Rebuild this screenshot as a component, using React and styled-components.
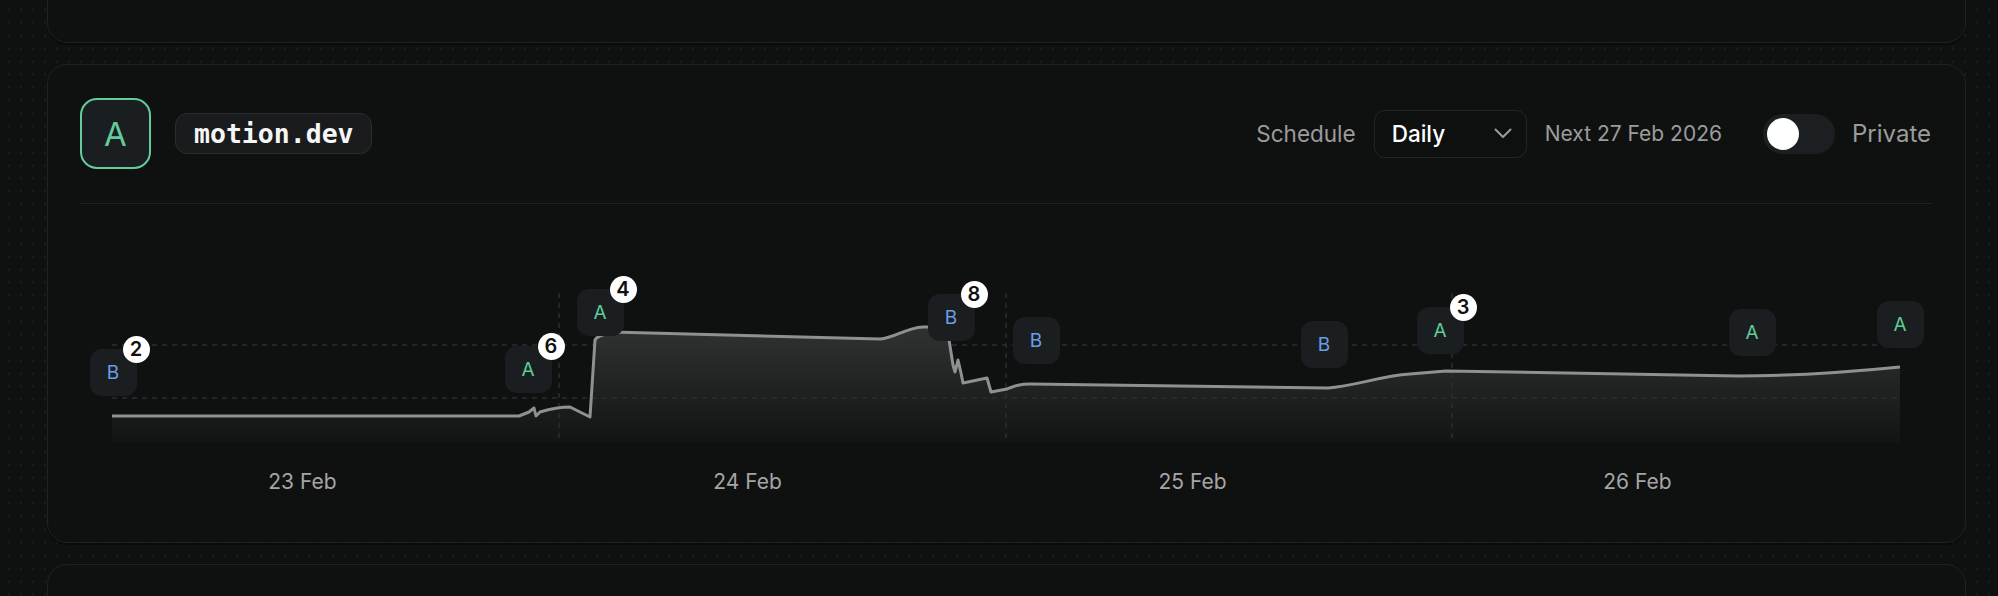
import React from 'react';
import styled, { createGlobalStyle } from 'styled-components';

const GlobalStyle = createGlobalStyle`
  html, body {
    margin: 0;
    height: 596px;
    overflow: hidden;
    background-color: #0f1111;
    background-image: radial-gradient(circle, #1a1d1d 1px, transparent 1.3px);
    background-size: 12px 13px;
    background-position: 3px 3px;
    font-family: 'Inter', 'Noto Sans', sans-serif;
    color: #e8e8e8;
  }
`;

// chart data, in px of the chart box
const LINE =
  'M32 212 L439 212 L449 208 L454 204 L456 212 L460 208 C470 205 480 203 490 203 L500 208 L510 213 L515 136 C517 132 522 131 526 130 L532 128 L800 135 C815 134 825 124 843 123 L867 123 L873 161 L875 168 L878 156 L881 169 L883 179 L907 174 L911 188 L927 185 C935 182 940 180 950 180 L1248 184 C1275 182 1300 172 1330 170 L1366 167 L1658 172 C1720 172 1770 168 1820 163';

const markers = [
  { x: 33, y: 168, kind: 'B', count: 2 },
  { x: 448, y: 165, kind: 'A', count: 6 },
  { x: 520, y: 108, kind: 'A', count: 4 },
  { x: 871, y: 113, kind: 'B', count: 8 },
  { x: 956, y: 136, kind: 'B' },
  { x: 1244, y: 140, kind: 'B' },
  { x: 1360, y: 126, kind: 'A', count: 3 },
  { x: 1672, y: 128, kind: 'A' },
  { x: 1820, y: 120, kind: 'A' },
];

const days = ['23 Feb', '24 Feb', '25 Feb', '26 Feb'];

const App = () => {
  return (
    <>
      <GlobalStyle />
      <Page>
        <Card $stub />
        <Card>
          <Header>
            <Identity>
              <Avatar>A</Avatar>
              <Domain>motion.dev</Domain>
            </Identity>
            <Controls>
              <Muted>Schedule</Muted>
              <Select>
                <span>Daily</span>
                <svg width="18" height="11" viewBox="0 0 18 11" fill="none">
                  <path d="M1.5 1.5 L9 9 L16.5 1.5" stroke="#9a9b9b" strokeWidth="2" strokeLinecap="round" strokeLinejoin="round" />
                </svg>
              </Select>
              <Muted $small>Next 27 Feb 2026</Muted>
              <PrivacyToggle>
                <Switch>
                  <Knob />
                </Switch>
                <Muted $large>Private</Muted>
              </PrivacyToggle>
            </Controls>
          </Header>
          <Divider />
          <ChartBox>
            <svg width="1851" height="264" viewBox="0 0 1851 264">
              <defs>
                <linearGradient id="area" x1="0" y1="123" x2="0" y2="238" gradientUnits="userSpaceOnUse">
                  <stop offset="0" stopColor="#ffffff" stopOpacity="0.14" />
                  <stop offset="1" stopColor="#ffffff" stopOpacity="0.015" />
                </linearGradient>
              </defs>
              <path d={`${LINE} L1820 238 L32 238 Z`} fill="url(#area)" />
              <g stroke="#2b2e30" strokeWidth="1.5" strokeDasharray="5 5">
                <line x1="32" y1="141" x2="1820" y2="141" />
                <line x1="32" y1="194" x2="1820" y2="194" />
                <line x1="479" y1="89" x2="479" y2="238" />
                <line x1="926" y1="89" x2="926" y2="238" />
                <line x1="1372" y1="89" x2="1372" y2="238" />
              </g>
              <path d={LINE} fill="none" stroke="#8f9090" strokeWidth="3" strokeLinejoin="round" />
            </svg>
            {markers.map((m, i) => (
              <Marker key={i} $kind={m.kind} style={{ left: m.x - 23.5, top: m.y - 23.5 }}>
                {m.kind}
                {m.count && <Count>{m.count}</Count>}
              </Marker>
            ))}
          </ChartBox>
          <Axis>
            {days.map((d) => (
              <AxisLabel key={d}>{d}</AxisLabel>
            ))}
          </Axis>
        </Card>
        <Card $tall />
      </Page>
    </>
  );
};

const Page = styled.div`
  display: flex;
  flex-direction: column;
  gap: 21px;
  padding: 0 32px 0 47px;
`;

const Card = styled.section`
  box-sizing: border-box;
  background: #0f1111;
  border: 1px solid #1f2223;
  border-radius: 20px;
  padding: 33px 34px 46px 32px;
  margin-top: ${(p) => (p.$stub ? '-40px' : '0')};
  height: ${(p) => (p.$stub ? '83px' : p.$tall ? '200px' : 'auto')};
  box-shadow: 0 2px 0 rgba(0, 0, 0, 0.35);
`;

const Header = styled.div`
  display: flex;
  align-items: center;
  justify-content: space-between;
  height: 71px;
  margin-bottom: 34px;
`;

const Identity = styled.div`
  display: flex;
  align-items: center;
  gap: 24px;
`;

const Avatar = styled.div`
  box-sizing: border-box;
  width: 71px;
  height: 71px;
  border: 2px solid #62cc9a;
  border-radius: 17px;
  background: #1a1e20;
  color: #62cc9a;
  display: flex;
  align-items: center;
  justify-content: center;
  font-size: 33px;
  font-weight: 400;
`;

const Domain = styled.div`
  box-sizing: border-box;
  height: 41px;
  padding: 0 17px 0 18px;
  display: flex;
  align-items: center;
  border: 1.5px solid #2c2d2f;
  border-radius: 12px;
  background: #1a1b1d;
  color: #f6f6f6;
  font-family: 'DejaVu Sans Mono', 'Liberation Mono', monospace;
  font-size: 26.5px;
  font-weight: 700;
`;

const Controls = styled.div`
  display: flex;
  align-items: center;
  gap: 18px;
`;

const Muted = styled.span`
  color: #9c9c9c;
  font-size: ${(p) => (p.$large ? '24px' : p.$small ? '21px' : '22.5px')};
`;

const Select = styled.div`
  box-sizing: border-box;
  width: 153px;
  height: 48px;
  padding: 0 14px 0 17px;
  display: flex;
  align-items: center;
  justify-content: space-between;
  border: 1.5px solid #232628;
  border-radius: 11px;
  background: #0e1010;
  color: #ffffff;
  font-size: 22.5px;
  font-weight: 500;
`;

const PrivacyToggle = styled.div`
  display: flex;
  align-items: center;
  gap: 17px;
  margin-left: 23px;
`;

const Switch = styled.div`
  box-sizing: border-box;
  width: 72px;
  height: 40px;
  padding: 4px;
  border-radius: 20px;
  background: #1c1f21;
`;

const Knob = styled.div`
  width: 32px;
  height: 32px;
  border-radius: 50%;
  background: #ffffff;
`;

const Divider = styled.div`
  height: 1px;
  background: #1f2223;
`;

const ChartBox = styled.div`
  position: relative;
  height: 264px;

  svg {
    display: block;
  }
`;

const Marker = styled.div`
  position: absolute;
  box-sizing: border-box;
  width: 47px;
  height: 47px;
  border-radius: 12px;
  background: #1a1e20;
  display: flex;
  align-items: center;
  justify-content: center;
  font-size: 19px;
  color: ${(p) => (p.$kind === 'A' ? '#5fcb97' : '#6d9de6')};
`;

const Count = styled.span`
  position: absolute;
  top: -13px;
  right: -13px;
  width: 27px;
  height: 27px;
  border-radius: 50%;
  background: #ffffff;
  color: #111111;
  display: flex;
  align-items: center;
  justify-content: center;
  font-size: 20px;
  font-weight: 600;
`;

const Axis = styled.div`
  display: grid;
  grid-template-columns: repeat(4, 445px);
  justify-items: center;
  line-height: 28px;
`;

const AxisLabel = styled.span`
  color: #a5a5a5;
  font-size: 21px;
`;

export default App;
